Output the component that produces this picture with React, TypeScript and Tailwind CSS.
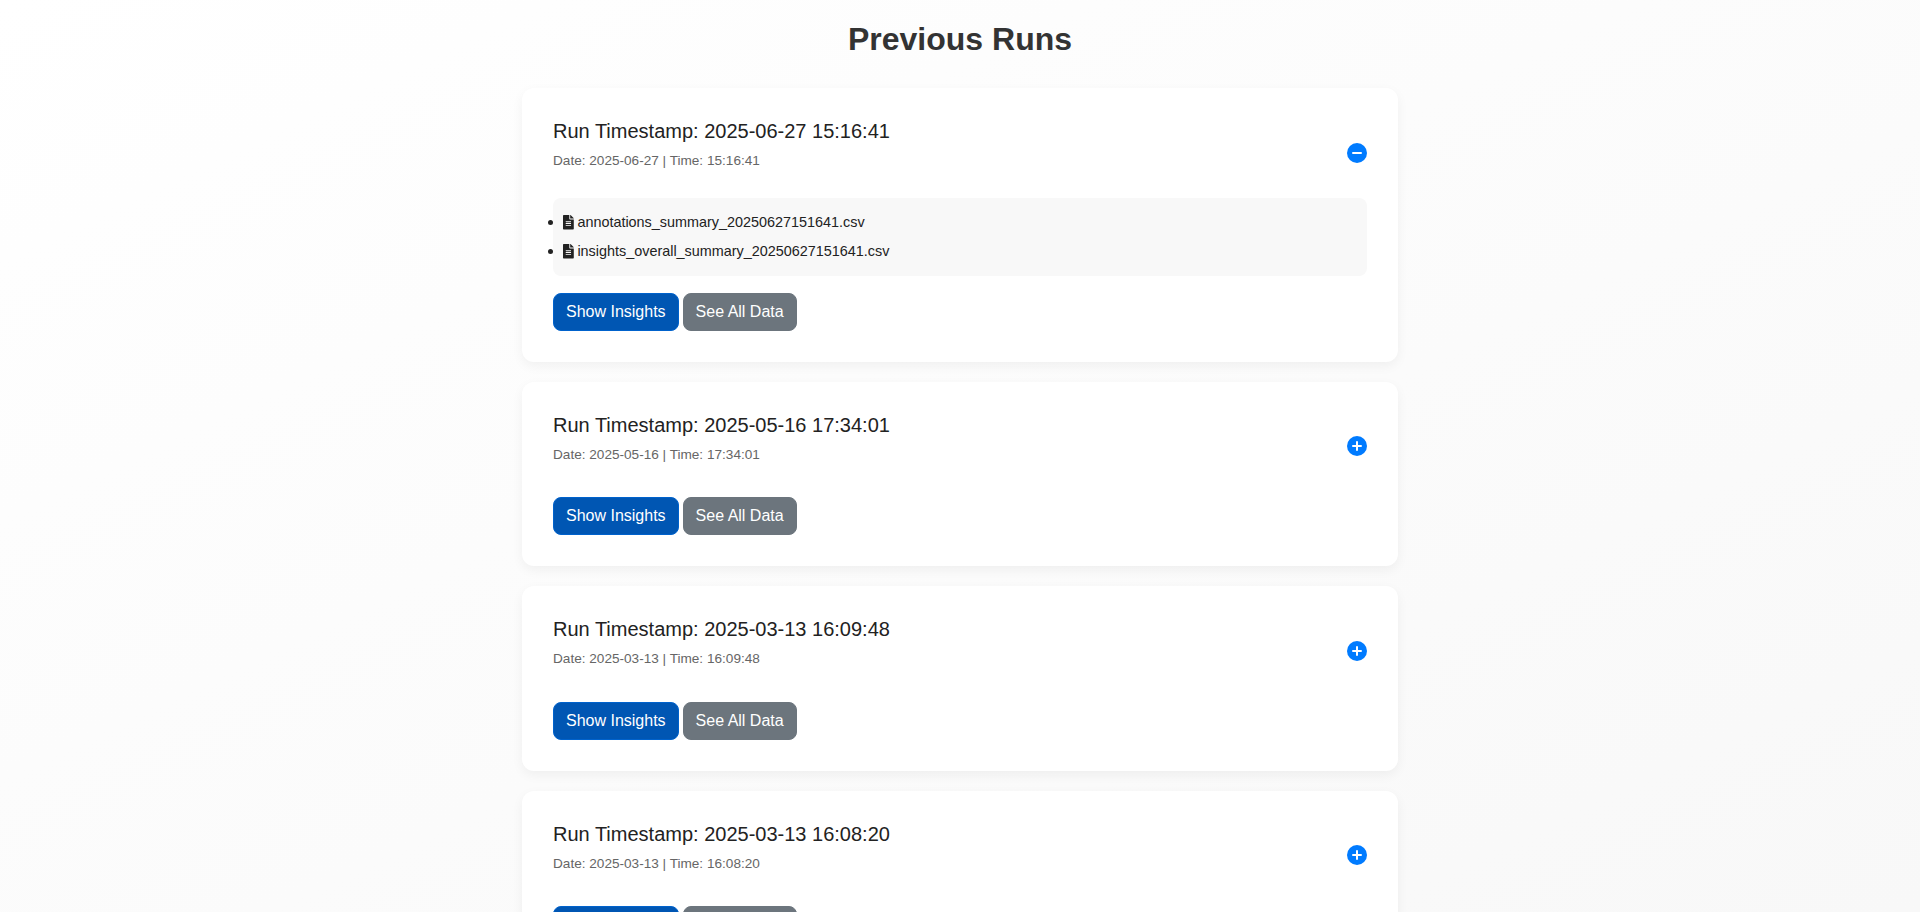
import { FaFileAlt } from 'react-icons/fa';

const runs = [
  {
    date: '2025-06-27',
    time: '15:16:41',
    open: true,
    files: ['annotations_summary_20250627151641.csv', 'insights_overall_summary_20250627151641.csv'],
  },
  { date: '2025-05-16', time: '17:34:01', open: false, files: [] },
  { date: '2025-03-13', time: '16:09:48', open: false, files: [] },
  { date: '2025-03-13', time: '16:08:20', open: false, files: [] },
];

function ToggleIcon({ open }: { open: boolean }) {
  return (
    <svg width="20" height="20" viewBox="0 0 20 20">
      <circle cx="10" cy="10" r="10" fill="#007bff" />
      <path d={open ? 'M6 10h8' : 'M6 10h8M10 6v8'} stroke="#fff" strokeWidth="2" strokeLinecap="round" />
    </svg>
  );
}

function RunCard({ date, time, open, files }: { date: string; time: string; open: boolean; files: string[] }) {
  return (
    <div className="rounded-[12px] bg-white p-[31px] shadow-[0_4px_12px_rgba(0,0,0,0.05)]">
      <div className="flex items-center justify-between">
        <div className="pb-[5px]">
          <h2 className="text-[20px] leading-[24px] text-[#222]">
            Run Timestamp: {date} {time}
          </h2>
          <p className="mt-[10px] text-[13.6px] leading-[16px] text-[#666]">
            Date: {date} | Time: {time}
          </p>
        </div>
        <button className="mt-[12px]">
          <ToggleIcon open={open} />
        </button>
      </div>

      {open ? (
        <ul className="mt-[24px] rounded-[8px] bg-[#f8f8f8] p-[10px]">
          {files.map((file) => (
            <li key={file} className="flex items-center py-[5px] text-[14.4px] leading-[19px] text-[#222]">
              <span className="mr-[10px] -ml-[15px] h-[5px] w-[5px] rounded-full bg-[#222]" />
              <FaFileAlt className="mr-[3.6px] w-[10.8px] text-[14.4px] text-[#222]" />
              {file}
            </li>
          ))}
        </ul>
      ) : (
        <div className="h-[29.5px]" />
      )}

      <div className={`flex gap-[4px] ${open ? 'mt-[16.5px]' : 'mt-[0px]'}`}>
        <button className="h-[38px] rounded-[8px] border border-[#0062cc] bg-[#0056b3] px-[12px] text-[16px] text-white">
          Show Insights
        </button>
        <button className="h-[38px] rounded-[8px] border border-[#6c757d] bg-[#6c757d] px-[12px] text-[16px] text-white">
          See All Data
        </button>
      </div>
    </div>
  );
}

export default function App() {
  return (
    <div className="h-screen overflow-hidden bg-gradient-to-br from-[#ffffff] to-[#f8f8f8] font-['Liberation_Sans',Arial,sans-serif]">
      <h1 className="pt-[21px] text-center text-[32px] font-bold leading-[37px] text-[#333]">Previous Runs</h1>
      <div className="mx-auto mt-[30px] flex w-[876px] flex-col gap-[20px]">
        {runs.map((run) => (
          <RunCard key={run.date + run.time} {...run} />
        ))}
      </div>
    </div>
  );
}
